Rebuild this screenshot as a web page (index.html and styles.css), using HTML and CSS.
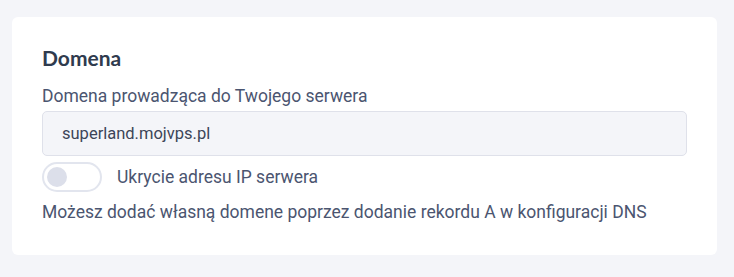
FILE: index.html
```html
<!DOCTYPE html>
<html lang="pl">
<head>
<meta charset="utf-8">
<link rel="stylesheet" href="styles.css">
</head>
<body>
<div class="page">
  <section class="card">
    <h2 class="title">Domena</h2>
    <label class="label" for="domain">Domena prowadząca do Twojego serwera</label>
    <div class="input" id="domain">superland.mojvps.pl</div>
    <div class="toggle-row">
      <span class="toggle"><span class="knob"></span></span>
      <span class="toggle-text">Ukrycie adresu IP serwera</span>
    </div>
    <p class="hint">Możesz dodać własną domene poprzez dodanie rekordu A w konfiguracji DNS</p>
  </section>
</div>
</body>
</html>
```

FILE: styles.css
```css
html, body {
  margin: 0;
  padding: 0;
  background: #f4f5f9;
}
.page {
  padding: 17px 17px 0 12px;
}
.card {
  background: #ffffff;
  border-radius: 6px;
  padding: 26px 30px 24px 30px;
  height: 238px;
  box-sizing: border-box;
  font-family: Roboto, "Liberation Sans", sans-serif;
  color: #4b5570;
}
.title {
  margin: 0;
  font-family: Lato, "Liberation Sans", sans-serif;
  font-weight: 700;
  font-size: 21px;
  line-height: 30px;
  color: #2f3b4e;
}
.label {
  display: block;
  margin-top: 11px;
  font-size: 17.5px;
  line-height: 24px;
}
.input {
  margin-top: 3px;
  height: 45px;
  box-sizing: border-box;
  border: 1px solid #dfe1ea;
  border-radius: 5px;
  background: #f4f5f9;
  padding: 0 19px;
  display: flex;
  align-items: center;
  font-size: 16.5px;
  color: #3c4558;
}
.toggle-row {
  display: flex;
  align-items: center;
  gap: 15px;
  margin-top: 6px;
}
.toggle {
  width: 60px;
  height: 30px;
  box-sizing: border-box;
  border: 2px solid #e2e5ee;
  border-radius: 15px;
  background: #ffffff;
  display: flex;
  align-items: center;
  padding-left: 3px;
}
.knob {
  width: 20px;
  height: 20px;
  border-radius: 50%;
  background: #dcdfea;
}
.toggle-text {
  font-size: 17.5px;
  line-height: 24px;
}
.hint {
  margin: 8px 0 0 0;
  font-size: 17.5px;
  line-height: 24px;
}
```
